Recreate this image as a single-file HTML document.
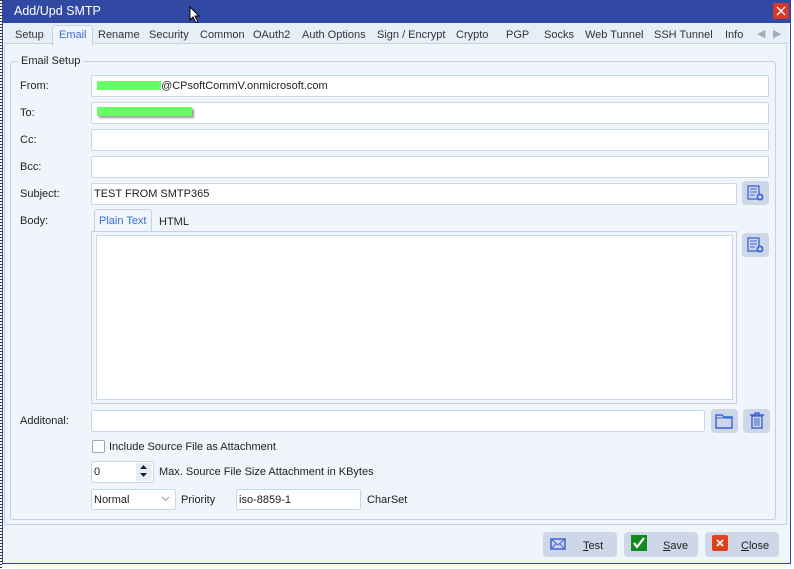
<!DOCTYPE html>
<html><head><style>
*{box-sizing:border-box;margin:0;padding:0}
body{width:794px;height:569px;background:#fff;position:relative;overflow:hidden;font-family:"Liberation Sans",sans-serif;font-size:11px;color:#1e1e1e}
.a{position:absolute}
.win{left:2px;top:0;width:789px;height:564px;background:#f0f5fb;border:1px solid #3249a3;border-top:none}
.title{left:2px;top:0;width:789px;height:23px;background:#3249a3;color:#fff;font-size:12.5px;padding:4px 0 0 12px}
.inp{position:absolute;background:#fff;border:1px solid #c8d6e8;border-radius:2px;height:22px;padding:4px 0 0 2px}
.lbl{position:absolute;font-size:11px;margin-top:1px}
.ib{position:absolute;width:27px;height:24px;background:#cdd7e8;border-radius:4px}
.btn{position:absolute;top:532px;width:74px;height:25px;background:#cdd7e8;border-radius:4px;font-size:11px}
.tab{position:absolute;top:29px;font-size:11px;color:#333}
</style></head><body>
<div class="a" style="left:0;top:0;width:2px;height:569px;background:repeating-linear-gradient(#333 0 1px,#fff 1px 3px)"></div>
<div class="a win"></div>
<div class="a title">Add/Upd SMTP</div>
<svg class="a" style="left:189px;top:6px" width="12" height="18"><path d="M1 1 L1 14 L4 11 L7 17 L9 16 L6 10 L10 10 Z" fill="#fff" stroke="#000" stroke-width="1"/></svg>
<div class="a" style="left:773px;top:3px;width:16px;height:16px;background:#d23a2a;border-radius:2px"></div>
<svg class="a" style="left:776px;top:6px" width="10" height="10"><path d="M1 1L9 9M9 1L1 9" stroke="#fff" stroke-width="1.3"/></svg>
<div class="a" style="left:4px;top:23px;width:784px;height:21px;background:#e6eef8;border-bottom:1px solid #c3d2e6"></div>
<div class="a" style="left:52px;top:25px;width:41px;height:21px;background:#f0f5fb;border:1px solid #c3d2e6;border-bottom:none;border-radius:3px 3px 0 0"></div>
<div class="tab" style="left:15px">Setup</div>
<div class="tab" style="left:59px;color:#3a6fd0">Email</div>
<div class="tab" style="left:98px">Rename</div>
<div class="tab" style="left:149px">Security</div>
<div class="tab" style="left:200px">Common</div>
<div class="tab" style="left:253px">OAuth2</div>
<div class="tab" style="left:302px">Auth Options</div>
<div class="tab" style="left:377px">Sign / Encrypt</div>
<div class="tab" style="left:456px">Crypto</div>
<div class="tab" style="left:506px">PGP</div>
<div class="tab" style="left:544px">Socks</div>
<div class="tab" style="left:585px">Web Tunnel</div>
<div class="tab" style="left:654px">SSH Tunnel</div>
<div class="tab" style="left:725px">Info</div>
<div class="tab" style="left:757px;top:27px;color:#aab">&#9664;</div>
<div class="tab" style="left:773px;top:27px;color:#aab">&#9654;</div>
<div class="a" style="left:4px;top:45px;width:783px;height:480px;border:1px solid #c3d2e6;border-top:none"></div>
<div class="a" style="left:10px;top:61px;width:766px;height:459px;border:1px solid #c3d2e6;border-radius:3px"></div>
<div class="lbl" style="left:18px;top:54px;background:#f0f5fb;padding:0 3px">Email Setup</div>
<div class="lbl" style="left:20px;top:79px">From:</div>
<div class="inp" style="left:91px;top:75px;width:678px">&nbsp;<span style="display:inline-block;width:64px;height:9px;background:#66ff66;vertical-align:-1px"></span>@CPsoftCommV.onmicrosoft.com</div>
<div class="lbl" style="left:20px;top:106px">To:</div>
<div class="inp" style="left:91px;top:102px;width:678px">&nbsp;<span style="display:inline-block;width:95px;height:9px;background:#66ff66;box-shadow:2px 2px 2px #999"></span></div>
<div class="lbl" style="left:20px;top:133px">Cc:</div>
<div class="inp" style="left:91px;top:129px;width:678px"></div>
<div class="lbl" style="left:20px;top:160px">Bcc:</div>
<div class="inp" style="left:91px;top:156px;width:678px"></div>
<div class="lbl" style="left:20px;top:187px">Subject:</div>
<div class="inp" style="left:91px;top:183px;width:646px">TEST FROM SMTP365</div>
<div class="ib" style="left:742px;top:181px"></div>
<svg class="a" style="left:747px;top:185px" width="18" height="17"><rect x="1" y="1" width="11" height="13" fill="none" stroke="#3a64d8" stroke-width="1.3"/><path d="M3 4h7M3 7h7M3 10h5" stroke="#3a64d8"/><circle cx="13" cy="12" r="3.5" fill="#3a64d8"/><path d="M11 12h4M13 10v4" stroke="#fff"/></svg>
<div class="lbl" style="left:20px;top:214px">Body:</div>
<div class="a" style="left:94px;top:209px;width:58px;height:23px;background:#f0f5fb;border:1px solid #c3d2e6;border-bottom:none;border-radius:3px 3px 0 0;color:#3a6fd0;padding:5px 0 0 4px">Plain Text</div>
<div class="lbl" style="left:159px;top:215px">HTML</div>
<div class="a" style="left:91px;top:231px;width:646px;height:173px;border:1px solid #c3d2e6"></div>
<div class="a" style="left:96px;top:235px;width:637px;height:165px;background:#fff;border:1px solid #c8d6e8"></div>
<div class="ib" style="left:742px;top:233px"></div>
<svg class="a" style="left:747px;top:237px" width="18" height="17"><rect x="1" y="1" width="11" height="13" fill="none" stroke="#3a64d8" stroke-width="1.3"/><path d="M3 4h7M3 7h7M3 10h5" stroke="#3a64d8"/><circle cx="13" cy="12" r="3.5" fill="#3a64d8"/><path d="M11 12h4M13 10v4" stroke="#fff"/></svg>
<div class="lbl" style="left:20px;top:414px">Additonal:</div>
<div class="inp" style="left:91px;top:410px;width:614px"></div>
<div class="ib" style="left:711px;top:409px"></div>
<svg class="a" style="left:715px;top:413px" width="18" height="16"><path d="M1 2h6l2 2h8v11H1z" fill="none" stroke="#3a64d8" stroke-width="1.4"/><path d="M1 5h16" stroke="#3a64d8"/></svg>
<div class="ib" style="left:743px;top:409px"></div>
<svg class="a" style="left:749px;top:412px" width="16" height="18"><path d="M1 3h14M6 3V1h4v2" stroke="#3a64d8" stroke-width="1.4" fill="none"/><rect x="3" y="4" width="10" height="12" fill="none" stroke="#3a64d8" stroke-width="1.4"/><path d="M6 6v8M8 6v8M10 6v8" stroke="#3a64d8"/></svg>
<div class="a" style="left:92px;top:440px;width:13px;height:13px;background:#fff;border:1px solid #9aa8bb;border-radius:2px"></div>
<div class="lbl" style="left:109px;top:440px">Include Source File as Attachment</div>
<div class="inp" style="left:91px;top:461px;width:63px">0</div>
<div class="a" style="left:136px;top:463px;width:16px;height:18px;background:#e8eef6"></div>
<svg class="a" style="left:139px;top:464px" width="9" height="14"><path d="M4.5 1L8 5H1zM4.5 13L8 9H1z" fill="#222"/></svg>
<div class="lbl" style="left:159px;top:465px">Max. Source File Size Attachment in KBytes</div>
<div class="inp" style="left:91px;top:489px;width:85px;height:21px">Normal</div>
<svg class="a" style="left:161px;top:496px" width="9" height="6"><path d="M1 1l3.5 3.5L8 1" stroke="#999" fill="none"/></svg>
<div class="lbl" style="left:181px;top:493px">Priority</div>
<div class="inp" style="left:236px;top:489px;width:125px;height:21px">iso-8859-1</div>
<div class="lbl" style="left:367px;top:493px">CharSet</div>
<div class="btn" style="left:543px"></div>
<svg class="a" style="left:550px;top:538px" width="16" height="12"><rect x="1" y="1" width="14" height="10" fill="none" stroke="#3a64d8" stroke-width="1.5"/><path d="M1 1l7 6 7-6M1 11l5-5M15 11l-5-5" stroke="#3a64d8" fill="none"/></svg>
<div class="lbl" style="left:583px;top:539px"><u>T</u>est</div>
<div class="btn" style="left:624px"></div>
<div class="a" style="left:631px;top:535px;width:16px;height:16px;background:#138a1f"></div>
<svg class="a" style="left:632px;top:536px" width="14" height="14"><path d="M2 7l3 4 7-9" stroke="#fff" stroke-width="2.2" fill="none"/></svg>
<div class="lbl" style="left:663px;top:539px"><u>S</u>ave</div>
<div class="btn" style="left:705px"></div>
<div class="a" style="left:712px;top:535px;width:16px;height:16px;background:#e0401a;border-radius:2px"></div>
<svg class="a" style="left:716px;top:539px" width="8" height="8"><path d="M1 1l6 6M7 1L1 7" stroke="#fff" stroke-width="1.8"/></svg>
<div class="lbl" style="left:741px;top:539px"><u>C</u>lose</div>
</body></html>
